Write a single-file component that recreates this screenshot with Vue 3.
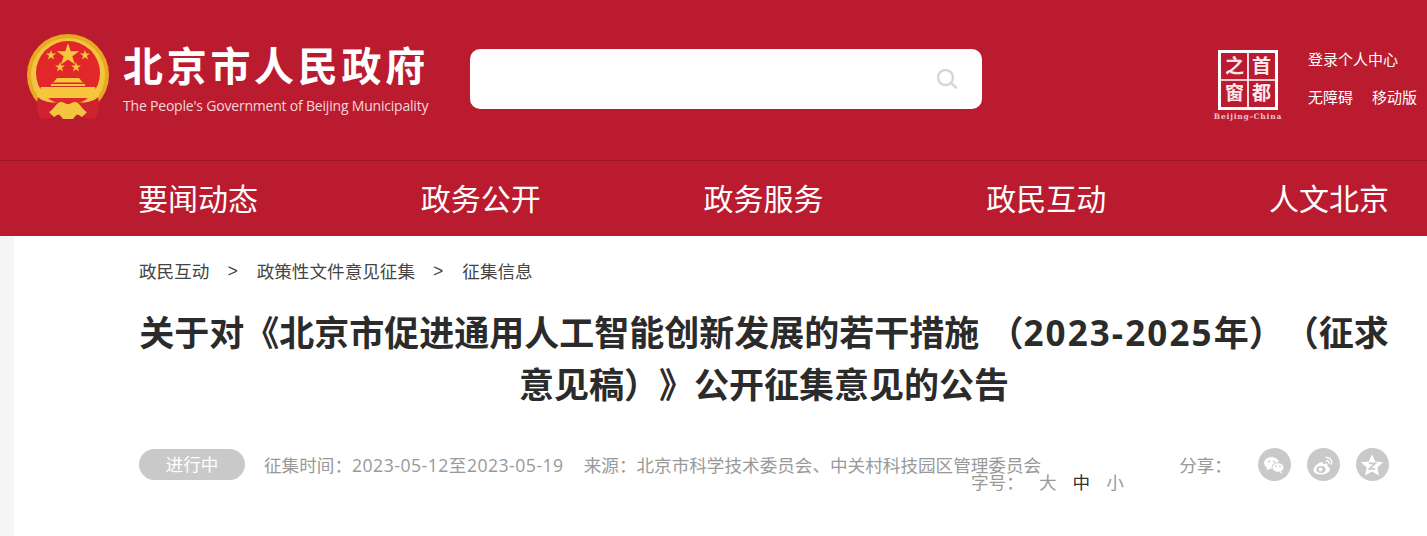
<script setup>
const navItems = ['要闻动态', '政务公开', '政务服务', '政民互动', '人文北京']
const crumbs = ['政民互动', '政策性文件意见征集', '征集信息']
</script>

<template>
  <div class="page">
    <header class="top">
      <div class="brand">
        <svg class="emblem" viewBox="0 0 84 88" width="84" height="88">
          <circle cx="42" cy="41" r="41" fill="#e6a921" />
          <circle cx="42" cy="41" r="37" fill="#f3c440" />
          <circle cx="42" cy="39" r="32" fill="#e2272a" />
          <polygon fill="#f6c73c" points="42,9 44.700,17.200 53.200,17.200 46.300,22.200 49,30.400 42,25.400 35,30.400 37.700,22.200 30.800,17.200 39.300,17.200" />
          <polygon fill="#f6c73c" points="25,16 26.200,19.600 30,19.600 26.900,21.800 28.100,25.400 25,23.200 21.900,25.400 23.100,21.800 20,19.600 23.800,19.600" />
          <polygon fill="#f6c73c" points="59,16 60.200,19.600 64,19.600 60.900,21.800 62.100,25.400 59,23.200 55.900,25.400 57.100,21.800 54,19.600 57.800,19.600" />
          <polygon fill="#f6c73c" points="34,28 35.200,31.600 39,31.600 35.900,33.800 37.100,37.400 34,35.200 30.900,37.400 32.100,33.800 29,31.600 32.800,31.600" />
          <polygon fill="#f6c73c" points="50,28 51.200,31.600 55,31.600 51.900,33.800 53.100,37.400 50,35.200 46.900,37.400 48.100,33.800 45,31.600 48.800,31.600" />
          <path fill="#f6c73c" d="M31 44h22l4 5H27zM25 50h34v2H25zM15 53h54l4 11H11z" />
          <path fill="#d9202a" d="M28 48h28v2H28z" opacity=".5" />
          <path fill="#cf2230" d="M12 63c-2 7-1 15 2 21 6 2 10 1 14-2l-2-4 16 2 16-2-2 4c4 3 8 4 14 2 3-6 4-14 2-21-5 5-12 6-30 6s-25-1-30-6z" />
          <path fill="#f3c440" d="M23 78c5-2 7-10 12-10 3 0 4 2 7 2s4-2 7-2c5 0 7 8 12 10l-5 5-5-3-4 5h-10l-4-5-5 3z" />
        </svg>
        <div class="brand-text">
          <div class="brand-cn">北京市人民政府</div>
          <div class="brand-en">The People's Government of Beijing Municipality</div>
        </div>
      </div>

      <div class="search">
        <svg class="search-icon" viewBox="0 0 22 22" width="22" height="22">
          <circle cx="9.500" cy="9.500" r="7.500" fill="none" stroke="#d6d6d6" stroke-width="2.400" />
          <path d="M15 15l5 4.500" stroke="#d6d6d6" stroke-width="2.600" stroke-linecap="round" />
        </svg>
      </div>

      <div class="capital">
        <div class="seal">
          <span class="seal-char">之</span>
          <span class="seal-char">首</span>
          <span class="seal-char">窗</span>
          <span class="seal-char">都</span>
        </div>
        <div class="seal-en">Beijing-China</div>
      </div>

      <div class="links">
        <div class="link-row">登录个人中心</div>
        <div class="link-row link-pair">
          <span>无障碍</span>
          <span>移动版</span>
        </div>
      </div>
    </header>

    <nav class="nav">
      <a v-for="item in navItems" :key="item" class="nav-item">{{ item }}</a>
    </nav>

    <main class="body">
      <div class="crumbs">
        <template v-for="(c, i) in crumbs" :key="c">
          <span v-if="i > 0" class="crumb-sep">&gt;</span>
          <span>{{ c }}</span>
        </template>
      </div>

      <h1 class="title">关于对《北京市促进通用人工智能创新发展的若干措施 （<span class="years">2023-2025</span>年）（征求意见稿）》公开征集意见的公告</h1>

      <div class="meta">
        <span class="status">进行中</span>
        <span class="meta-text">征集时间：<span class="date">2023-05-12至2023-05-19</span></span>
        <span class="meta-text source">来源：北京市科学技术委员会、中关村科技园区管理委员会</span>
        <span class="meta-text share-label">分享：</span>
        <div class="share">
          <span class="share-btn">
            <svg viewBox="0 0 24 24" width="24" height="24" fill="#fff">
              <ellipse cx="9.500" cy="10" rx="7.500" ry="6" />
              <path d="M5.500 14l-1 3.500 4-2z" />
              <ellipse cx="16" cy="14.500" rx="6" ry="4.800" stroke="#c9c9c9" stroke-width="1" />
              <path d="M19 18l1.500 2.500-3.800-1.600z" />
              <circle cx="7" cy="8.400" r="1" fill="#c9c9c9" />
              <circle cx="12" cy="8.400" r="1" fill="#c9c9c9" />
              <circle cx="14" cy="13.400" r=".8" fill="#c9c9c9" />
              <circle cx="18" cy="13.400" r=".8" fill="#c9c9c9" />
            </svg>
          </span>
          <span class="share-btn">
            <svg viewBox="0 0 24 24" width="24" height="24">
              <path fill="#fff" d="M10.500 9c-4 1.200-8 5-8 8 0 3 3.800 4.500 7.500 4.500 5 0 9-2.700 9-5.500 0-2-2.200-2.500-2.600-2.700.7-1.800 0-3-2.500-2.600l-2 .6c.4-1.500-.2-2.800-1.400-2.300z" />
              <ellipse cx="10" cy="16.500" rx="4.600" ry="3.400" fill="#c9c9c9" />
              <circle cx="9.500" cy="16.500" r="2" fill="#fff" />
              <path d="M15 4.500c3.500-.5 6.500 2.500 5.500 6.500M15.500 7.800c1.800-.3 2.900 1 2.500 2.800" fill="none" stroke="#fff" stroke-width="1.500" stroke-linecap="round" />
            </svg>
          </span>
          <span class="share-btn">
            <svg viewBox="0 0 24 24" width="26" height="26">
              <path fill="#fff" d="M12 2l3 6.700 7.300.8-5.400 4.900 1.500 7.200-6.400-3.700-6.400 3.700 1.500-7.200-5.400-4.900 7.300-.8z" />
              <path d="M9 10.500h6l-5.500 5h5.500" fill="none" stroke="#c9c9c9" stroke-width="1.600" />
            </svg>
          </span>
        </div>
      </div>

      <div class="font-size">
        <span class="fs-label">字号：</span>
        <span class="fs-opt">大</span>
        <span class="fs-opt active">中</span>
        <span class="fs-opt">小</span>
      </div>
    </main>
  </div>
</template>

<style>
html,
body {
  margin: 0;
  background: #fff;
  overflow: hidden;
}
</style>

<style scoped>
.page {
  width: 1427px;
  height: 536px;
  overflow: hidden;
  font-family: "Open Sans", "Noto Sans CJK SC", sans-serif;
}

.top {
  height: 161px;
  box-sizing: border-box;
  background: #ba1b2f;
  border-bottom: 1px solid #a01526;
  display: flex;
  align-items: flex-start;
  color: #fff;
}

.brand {
  display: flex;
  margin: 34px 0 0 26px;
  width: 444px;
}

.emblem {
  flex: none;
}

.brand-text {
  margin: 5px 0 0 13px;
}

.brand-cn {
  font-family: "Noto Sans CJK SC", sans-serif;
  font-size: 40px;
  line-height: 50px;
  font-weight: 700;
  letter-spacing: 3.700px;
  white-space: nowrap;
}

.brand-en {
  margin-top: 7px;
  font-size: 14px;
  line-height: 20px;
  letter-spacing: -0.2px;
  white-space: nowrap;
  color: #f5d6da;
}

.search {
  margin-top: 49px;
  width: 512px;
  height: 60px;
  background: #fff;
  border-radius: 10px;
  display: flex;
  align-items: center;
  justify-content: flex-end;
  padding-right: 24px;
  box-sizing: border-box;
}

.capital {
  margin: 50px 0 0 231px;
  width: 70px;
  display: flex;
  flex-direction: column;
  align-items: center;
}

.seal {
  width: 60px;
  height: 60px;
  box-sizing: border-box;
  border: 3px solid #fff;
  display: grid;
  grid-template-columns: 1fr 1fr;
  grid-template-rows: 1fr 1fr;
  background:
    linear-gradient(#f8dde0, #f8dde0) center / 2px 100% no-repeat,
    linear-gradient(#f4c9ce, #f4c9ce) center / 100% 2px no-repeat;
}

.seal-char {
  font-family: "Liberation Serif", "Noto Sans CJK SC", serif;
  font-size: 19px;
  font-weight: 700;
  line-height: 27px;
  text-align: center;
  color: #fbe9eb;
}

.seal-en {
  margin-top: 2px;
  font-family: "DejaVu Serif", serif;
  font-size: 7.500px;
  line-height: 10px;
  font-weight: 700;
  letter-spacing: 0.8px;
  white-space: nowrap;
  color: #f3c3c9;
}

.links {
  margin: 49px 0 0 25px;
  font-size: 15px;
  width: 110px;
  flex: none;
}

.link-row {
  line-height: 20px;
  white-space: nowrap;
}

.link-pair {
  margin-top: 18px;
  display: flex;
  gap: 19px;
}

.nav {
  height: 75px;
  background: #ba1b2f;
  padding: 0 38px 0 138px;
  display: flex;
  justify-content: space-between;
  align-items: center;
}

.nav-item {
  color: #fff;
  font-size: 30px;
  line-height: 78px;
}

.body {
  height: 300px;
  border-left: 14px solid #f5f5f5;
  padding: 22px 38px 0 125px;
}

.crumbs {
  display: flex;
  font-size: 17.6px;
  line-height: 26px;
  color: #444;
}

.crumb-sep {
  margin: 0 19px 0 18px;
  font-family: "Liberation Sans", sans-serif;
}

.title {
  margin: 23px 0 0;
  font-size: 35px;
  line-height: 52px;
  font-weight: 700;
  color: #2b2b2b;
  text-align: center;
  text-spacing-trim: space-all;
}

.years {
  letter-spacing: 2.1px;
}

.meta {
  margin-top: 38px;
  display: flex;
  align-items: center;
  height: 31px;
}

.status {
  flex: none;
  width: 106px;
  height: 31px;
  line-height: 31px;
  border-radius: 16px;
  background: #c9c9c9;
  color: #fff;
  font-size: 17.6px;
  text-align: center;
}

.meta-text {
  flex: none;
  margin-left: 19px;
  font-size: 17.6px;
  color: #999;
  white-space: nowrap;
}

.date {
  letter-spacing: 0.5px;
}

.source {
  margin-left: 20px;
}

.share-label {
  margin-left: 138px;
}

.share {
  flex: none;
  display: flex;
  gap: 16px;
  margin-left: 26px;
}

.share-btn {
  width: 33px;
  height: 33px;
  border-radius: 50%;
  background: #c9c9c9;
  display: flex;
  align-items: center;
  justify-content: center;
}

.font-size {
  margin: -10px 0 0 832px;
  display: flex;
  font-size: 17.6px;
  line-height: 24px;
  color: #999;
}

.fs-label {
  width: 68px;
}

.fs-opt {
  margin-right: 16px;
}

.active {
  color: #333;
}
</style>
